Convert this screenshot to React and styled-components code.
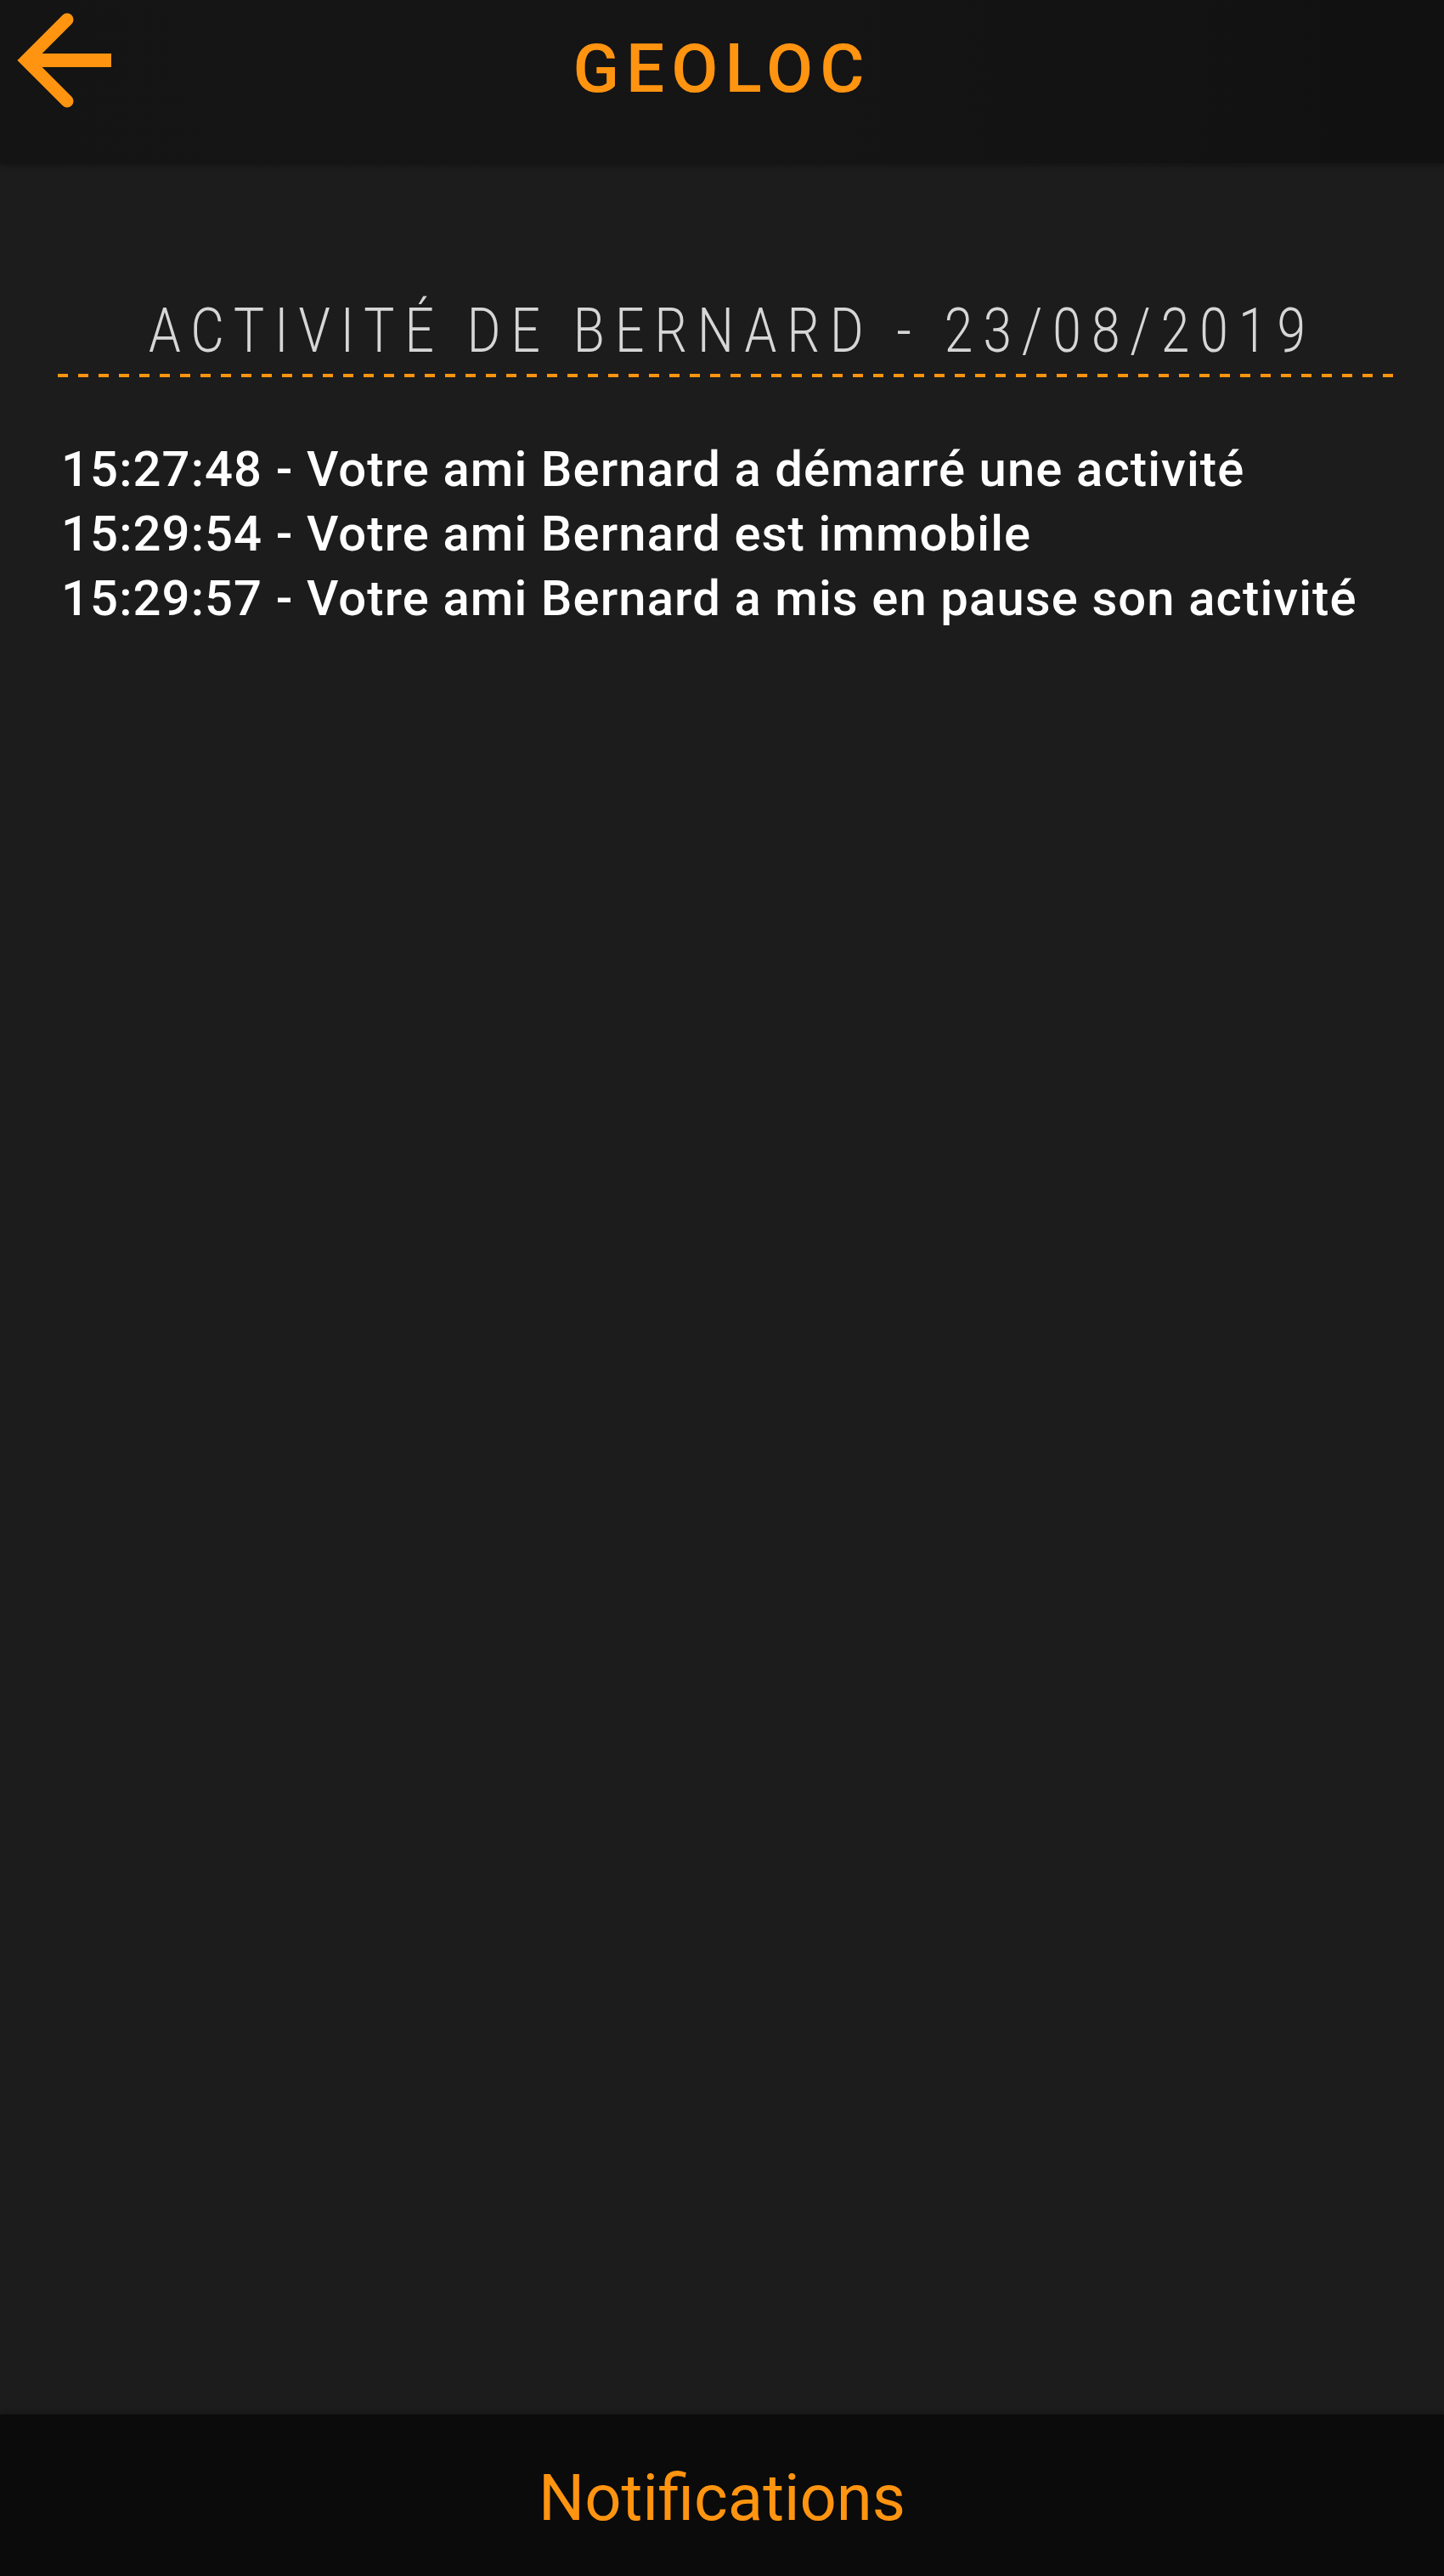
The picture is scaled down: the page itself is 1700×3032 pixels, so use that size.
import React from "react";
import styled, { createGlobalStyle } from "styled-components";

const ORANGE = "#ff9410";

const Global = createGlobalStyle`
  html, body {
    margin: 0;
    padding: 0;
    background: #1c1c1c;
  }
  body {
    font-family: Roboto, "Liberation Sans", sans-serif;
  }
`;

const Screen = styled.div`
  min-height: 100vh;
  display: flex;
  flex-direction: column;
  background: #1c1c1c;
`;

const Header = styled.header`
  height: 192px;
  display: grid;
  grid-template-columns: 1fr auto 1fr;
  background: linear-gradient(90deg, #141414, #151515 50%, #111111);
  box-shadow: 0 2px 6px rgba(0, 0, 0, 0.35);
`;

const BackButton = styled.button`
  align-self: start;
  justify-self: start;
  width: 140px;
  height: 140px;
  padding: 0;
  border: none;
  background: transparent;
  cursor: pointer;

  svg {
    display: block;
  }
`;

const AppTitle = styled.h1`
  margin: 0;
  align-self: center;
  margin-top: -30px;
  font-family: Roboto, "Liberation Sans", sans-serif;
  font-weight: 500;
  font-size: 80px;
  letter-spacing: 8px;
  color: ${ORANGE};
`;

const Content = styled.main`
  flex: 1;
  padding: 0 57px 0 68px;
`;

const SectionTitle = styled.h2`
  margin: 0;
  padding-top: 162px;
  padding-bottom: 14px;
  display: flex;
  justify-content: center;
  font-family: Roboto, "Liberation Sans", sans-serif;
  font-weight: 300;
  font-size: 72px;
  line-height: 1;
  color: #d6d6d6;
  white-space: nowrap;

  span {
    flex: none;
    letter-spacing: 14.4px;
    margin-right: -14px;
    transform: scaleX(0.84);
  }
`;

const Dashes = styled.div`
  height: 4px;
  background: repeating-linear-gradient(
    90deg,
    ${ORANGE} 0 12px,
    transparent 12px 24px
  );
`;

const Log = styled.ul`
  list-style: none;
  margin: 0;
  padding: 70px 0 0 4px;
`;

const LogItem = styled.li`
  font-family: Roboto, "Liberation Sans", sans-serif;
  font-size: 58px;
  font-weight: 500;
  line-height: 76px;
  letter-spacing: 1.1px;
  color: #ffffff;
  white-space: nowrap;
`;

const Footer = styled.footer`
  height: 190px;
  display: flex;
  align-items: center;
  justify-content: center;
  background: #0b0b0b;
  box-shadow: 0 -2px 6px rgba(0, 0, 0, 0.3);
`;

const FooterLabel = styled.span`
  font-family: Roboto, "Liberation Sans", sans-serif;
  font-size: 76px;
  color: ${ORANGE};
  margin-top: 6px;
`;

const events = [
  { time: "15:27:48", text: "Votre ami Bernard a démarré une activité" },
  { time: "15:29:54", text: "Votre ami Bernard est immobile" },
  { time: "15:29:57", text: "Votre ami Bernard a mis en pause son activité" },
];

function BackArrow() {
  return (
    <svg width="140" height="140" viewBox="0 0 140 140" fill="none">
      <path
        d="M131 71 H36"
        stroke={ORANGE}
        strokeWidth="16"
        strokeLinecap="butt"
      />
      <path
        d="M79 23 L31 71 L79 119"
        stroke={ORANGE}
        strokeWidth="15"
        strokeLinecap="round"
        strokeLinejoin="miter"
      />
    </svg>
  );
}

export default function App() {
  return (
    <>
      <Global />
      <Screen>
        <Header>
          <BackButton aria-label="Retour">
            <BackArrow />
          </BackButton>
          <AppTitle>GEOLOC</AppTitle>
          <div />
        </Header>

        <Content>
          <SectionTitle>
            <span>ACTIVITÉ DE BERNARD - 23/08/2019</span>
          </SectionTitle>
          <Dashes />

          <Log>
            {events.map((e) => (
              <LogItem key={e.time}>
                {e.time} - {e.text}
              </LogItem>
            ))}
          </Log>
        </Content>

        <Footer>
          <FooterLabel>Notifications</FooterLabel>
        </Footer>
      </Screen>
    </>
  );
}
